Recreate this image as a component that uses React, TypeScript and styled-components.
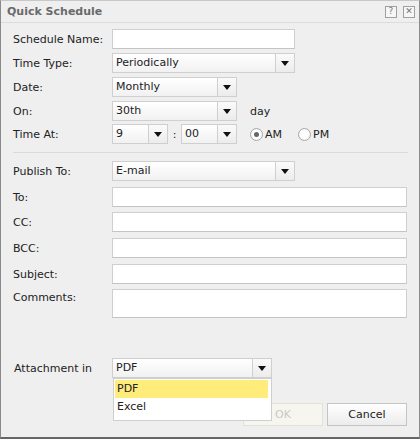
import React from "react";
import styled, { createGlobalStyle } from "styled-components";

const Global = createGlobalStyle`
  html, body { margin: 0; padding: 0; background: #efefef; }
  body { font-family: "DejaVu Sans", Verdana, sans-serif; font-size: 11px; color: #222; }
  * { box-sizing: border-box; }
`;

const Dialog = styled.div`
  width: 420px;
  height: 439px;
  background: #efefef;
  border: 1px solid #8a8a8a;
  border-top-color: #c8c8c8;
  border-bottom: 2px solid #666;
  display: flex;
  flex-direction: column;
  position: relative;
`;

const TitleBar = styled.div`
  height: 22px;
  display: flex;
  align-items: center;
  padding: 0 4px 0 6px;
  border-bottom: 1px solid #dcdcdc;
`;

const Title = styled.div`
  flex: 1;
  font-weight: bold;
  color: #6a6a6a;
  font-size: 11px;
`;

const TitleButton = styled.div`
  width: 12px;
  height: 12px;
  border: 1px solid #a0a0a0;
  margin-left: 6px;
  display: flex;
  align-items: center;
  justify-content: center;
  color: #777;
  font-size: 9px;
  line-height: 1;
  background: #f6f6f6;
`;

const Content = styled.div`
  flex: 1;
  padding: 6px 12px 0 12px;
  display: flex;
  flex-direction: column;
`;

const Row = styled.div<{ $gap?: number }>`
  display: flex;
  align-items: center;
  height: 20px;
  margin-bottom: ${(p) => p.$gap ?? 4}px;
`;

const TallRow = styled(Row)`
  height: 29px;
  align-items: flex-start;
`;

const Label = styled.div<{ $pad?: number }>`
  width: 99px;
  padding-left: ${(p) => p.$pad ?? 0}px;
  flex-shrink: 0;
  white-space: nowrap;
`;

const TextInput = styled.div<{ $w?: number }>`
  width: ${(p) => (p.$w ? `${p.$w}px` : "auto")};
  flex: ${(p) => (p.$w ? "none" : "1")};
  height: 20px;
  background: #fff;
  border: 1px solid #cfcfcf;
  border-bottom-color: #c4c4c4;
`;

const TextArea = styled(TextInput)`
  height: 29px;
`;

const SelectBox = styled.div<{ $w: number }>`
  width: ${(p) => p.$w}px;
  height: 20px;
  display: flex;
  border: 1px solid #cfcfcf;
  background: linear-gradient(#ffffff, #f1f1f1);
  position: relative;
`;

const SelectText = styled.div`
  flex: 1;
  padding-left: 3px;
  line-height: 18px;
  white-space: nowrap;
  overflow: hidden;
`;

const ArrowBox = styled.div`
  width: 19px;
  border-left: 1px solid #cfcfcf;
  display: flex;
  align-items: center;
  justify-content: center;
  background: linear-gradient(#fafafa, #ececec);
`;

const Arrow = styled.div`
  width: 0;
  height: 0;
  border-left: 4px solid transparent;
  border-right: 4px solid transparent;
  border-top: 5px solid #111;
`;

const Plain = styled.span<{ $ml?: number; $mr?: number }>`
  margin-left: ${(p) => p.$ml ?? 0}px;
  margin-right: ${(p) => p.$mr ?? 0}px;
`;

const Colon = styled.span`
  width: 13px;
  text-align: center;
`;

const Radio = styled.div<{ $on?: boolean; $ml?: number }>`
  width: 13px;
  height: 13px;
  border-radius: 50%;
  border: 1px solid #a8a8a8;
  background: radial-gradient(circle, #ffffff 40%, #ededed);
  margin-left: ${(p) => p.$ml ?? 0}px;
  margin-right: 2px;
  display: flex;
  align-items: center;
  justify-content: center;
  &::after {
    content: "";
    display: ${(p) => (p.$on ? "block" : "none")};
    width: 5px;
    height: 5px;
    border-radius: 50%;
    background: #666;
  }
`;

const Separator = styled.div`
  height: 1px;
  background: #dadada;
  margin: 4px 0 8px 0;
  width: 395px;
`;

const DropList = styled.div`
  position: absolute;
  top: 19px;
  left: 0;
  width: 159px;
  height: 43px;
  background: #fff;
  border: 1px solid #cfcfcf;
  padding: 1px;
  z-index: 5;
`;

const DropItem = styled.div<{ $hl?: boolean }>`
  height: 18px;
  line-height: 18px;
  padding-left: 2px;
  width: 153px;
  background: ${(p) => (p.$hl ? "#ffec7a" : "transparent")};
  color: #222;
`;

const Footer = styled.div`
  display: flex;
  justify-content: flex-end;
  gap: 4px;
  padding: 0 12px 11px 0;
`;

const Button = styled.div<{ $disabled?: boolean }>`
  width: 80px;
  height: 23px;
  display: flex;
  align-items: center;
  justify-content: center;
  border: 1px solid ${(p) => (p.$disabled ? "#e2e2da" : "#c4c4c4")};
  background: ${(p) => (p.$disabled ? "#f6f6ee" : "linear-gradient(#ffffff, #ececec)")};
  color: ${(p) => (p.$disabled ? "#c8c8c8" : "#222")};
`;

const Select: React.FC<{ w: number; value: string; children?: React.ReactNode }> = ({ w, value, children }) => (
  <SelectBox $w={w}>
    <SelectText>{value}</SelectText>
    <ArrowBox>
      <Arrow />
    </ArrowBox>
    {children}
  </SelectBox>
);

export default function App() {
  return (
    <>
      <Global />
      <Dialog>
        <TitleBar>
          <Title>Quick Schedule</Title>
          <TitleButton>?</TitleButton>
          <TitleButton>✕</TitleButton>
        </TitleBar>
        <Content>
          <Row>
            <Label>Schedule Name:</Label>
            <TextInput $w={183} />
          </Row>
          <Row>
            <Label>Time Type:</Label>
            <Select w={183} value="Periodically" />
          </Row>
          <Row>
            <Label>Date:</Label>
            <Select w={125} value="Monthly" />
          </Row>
          <Row $gap={3}>
            <Label>On:</Label>
            <Select w={125} value="30th" />
            <Plain $ml={13}>day</Plain>
          </Row>
          <Row>
            <Label>Time At:</Label>
            <Select w={56} value="9" />
            <Colon>:</Colon>
            <Select w={56} value="00" />
            <Radio $on $ml={13} />
            <Plain>AM</Plain>
            <Radio $ml={16} />
            <Plain>PM</Plain>
          </Row>
          <Separator />
          <Row $gap={6}>
            <Label>Publish To:</Label>
            <Select w={183} value="E-mail" />
          </Row>
          <Row $gap={5}>
            <Label>To:</Label>
            <TextInput />
          </Row>
          <Row $gap={6}>
            <Label>CC:</Label>
            <TextInput />
          </Row>
          <Row $gap={6}>
            <Label>BCC:</Label>
            <TextInput />
          </Row>
          <Row $gap={5}>
            <Label>Subject:</Label>
            <TextInput />
          </Row>
          <TallRow>
            <Label style={{ lineHeight: "18px" }}>Comments:</Label>
            <TextArea />
          </TallRow>
          <Row style={{ marginTop: 36 }}>
            <Label $pad={1}>Attachment in</Label>
            <Select w={160} value="PDF">
              <DropList>
                <DropItem $hl>PDF</DropItem>
                <DropItem>Excel</DropItem>
              </DropList>
            </Select>
          </Row>
        </Content>
        <Footer>
          <Button $disabled>OK</Button>
          <Button>Cancel</Button>
        </Footer>
      </Dialog>
    </>
  );
}
